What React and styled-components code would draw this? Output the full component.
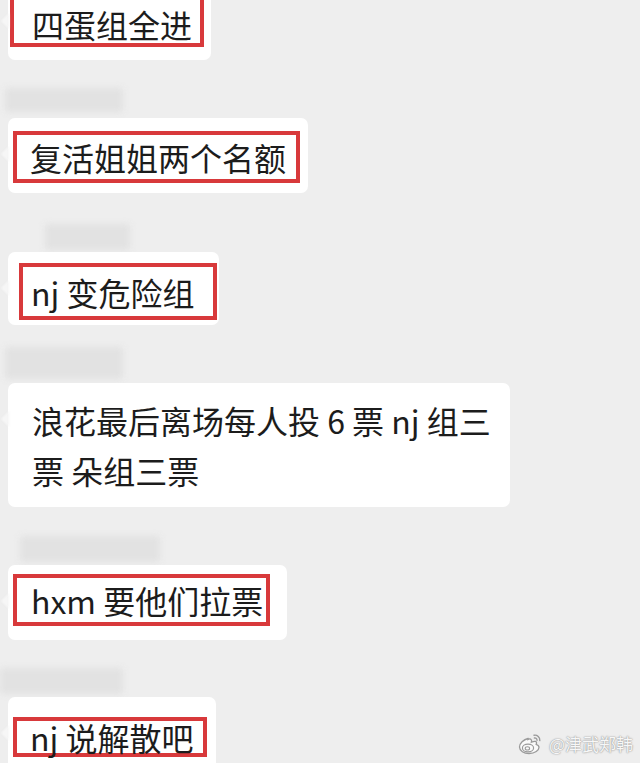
import React from 'react';
import styled, { createGlobalStyle } from 'styled-components';

const GlobalStyle = createGlobalStyle`
  html, body {
    margin: 0;
    padding: 0;
    background: #ededed;
  }
  body {
    font-family: 'Noto Sans CJK SC', 'Noto Sans', sans-serif;
  }
  * {
    box-sizing: border-box;
  }
`;

const Screen = styled.div`
  position: relative;
  width: 640px;
  height: 763px;
  overflow: hidden;
  background: #eeeeee;
`;

const Chat = styled.div`
  display: flex;
  flex-direction: column;
  align-items: flex-start;
`;

const Message = styled.div`
  display: flex;
  flex-direction: column;
  align-items: flex-start;
  margin-top: ${(p) => p.$top}px;
`;

/* 打码的昵称 */
const NameBar = styled.div`
  width: ${(p) => p.$w}px;
  height: ${(p) => p.$h}px;
  margin-left: ${(p) => p.$x}px;
  background: #e2e2e2;
  filter: blur(3px);
  border-radius: 2px;
`;

const Bubble = styled.div`
  position: relative;
  display: flex;
  flex-direction: column;
  align-items: flex-start;
  margin-top: ${(p) => p.$gap || 0}px;
  margin-left: 8px;
  padding: ${(p) => p.$pad};
  max-width: ${(p) => p.$max || 'none'};
  background: #ffffff;
  border-radius: 7px;
  color: #1c1c1c;
  font-size: 32px;
  line-height: ${(p) => p.$lh || 42}px;
  white-space: ${(p) => (p.$wrap ? 'normal' : 'nowrap')};

  &::before {
    content: '';
    position: absolute;
    left: -7px;
    top: ${(p) => p.$tail || 28}px;
    border-style: solid;
    border-width: 8px 8px 8px 0;
    border-color: transparent #f6f6f6 transparent transparent;
    filter: blur(1px);
  }
`;

const Highlight = styled.div`
  border: 4px solid #d8393b;
  padding: ${(p) => p.$inset};
  line-height: ${(p) => p.$lh || 42}px;
`;

const Watermark = styled.div`
  position: absolute;
  right: 7px;
  bottom: 7px;
  display: flex;
  align-items: center;
  gap: 6px;
  color: #f7f7f7;
  font-size: 17px;
  text-shadow: 0 0 1px #8d8d8d, 0 0 2px #a8a8a8;
`;

const WeiboLogo = () => (
  <svg width="25" height="22" viewBox="0 0 25 22">
    <path
      d="M10 5.5C5.5 6.5 1.5 10.5 1.5 14c0 3.8 4.4 6.5 9.5 6.5 6 0 10-3.2 10-6.2 0-1.8-1.6-2.6-2.8-3 .6-1.4.4-2.6-.8-2.9-1.2-.3-3 .4-4 .8.4-1.4.2-2.6-.8-3.1-.6-.3-1.6-.3-2.6.4z"
      fill="#fafafa"
      stroke="#9a9a9a"
      strokeWidth="1.3"
    />
    <ellipse cx="10" cy="15" rx="5.6" ry="3.9" fill="none" stroke="#9a9a9a" strokeWidth="1.2" />
    <ellipse cx="9.4" cy="15.4" rx="2.2" ry="1.6" fill="none" stroke="#9a9a9a" strokeWidth="1.1" />
    <path d="M16 2.2c3.2-.6 6.2 2 5.8 5.4" fill="none" stroke="#9a9a9a" strokeWidth="1.4" strokeLinecap="round" />
    <path d="M16.4 5c1.4-.3 2.8.9 2.6 2.4" fill="none" stroke="#9a9a9a" strokeWidth="1.3" strokeLinecap="round" />
  </svg>
);

const App = () => {
  return (
    <Screen>
      <GlobalStyle />
      <Chat>
        <Message $top={-17}>
          <Bubble $pad="12px 7px 13px 2px" $tail={30}>
            <Highlight $inset="6px 8px 0 18px" $lh={38}>四蛋组全进</Highlight>
          </Bubble>
        </Message>

        <Message $top={28}>
          <NameBar $x={5} $w={118} $h={24} />
          <Bubble $gap={6} $pad="13px 8px 10px 5px">
            <Highlight $inset="1px 10px 1px 13px">复活姐姐两个名额</Highlight>
          </Bubble>
        </Message>

        <Message $top={31}>
          <NameBar $x={45} $w={85} $h={26} />
          <Bubble $gap={2} $pad="11px 2px 5px 11px">
            <Highlight $inset="4px 18px 3px 8px">nj 变危险组</Highlight>
          </Bubble>
        </Message>

        <Message $top={22}>
          <NameBar $x={5} $w={118} $h={32} />
          <Bubble $gap={4} $pad="12px 14px 12px 24px" $lh={50} $max="502px" $wrap>
            浪花最后离场每人投 6 票 nj 组三票 朵组三票
          </Bubble>
        </Message>

        <Message $top={29}>
          <NameBar $x={20} $w={140} $h={26} />
          <Bubble $gap={3} $pad="9px 17px 14px 5px">
            <Highlight $inset="1px 3px 1px 14px">hxm 要他们拉票</Highlight>
          </Bubble>
        </Message>

        <Message $top={28}>
          <NameBar $x={0} $w={123} $h={26} />
          <Bubble $gap={3} $pad="20px 9px 20px 5px">
            <Highlight $inset="0 9px 0 13px" $lh={32}>nj 说解散吧</Highlight>
          </Bubble>
        </Message>
      </Chat>

      <Watermark>
        <WeiboLogo />
        <span>@津武郑韩</span>
      </Watermark>
    </Screen>
  );
};

export default App;
